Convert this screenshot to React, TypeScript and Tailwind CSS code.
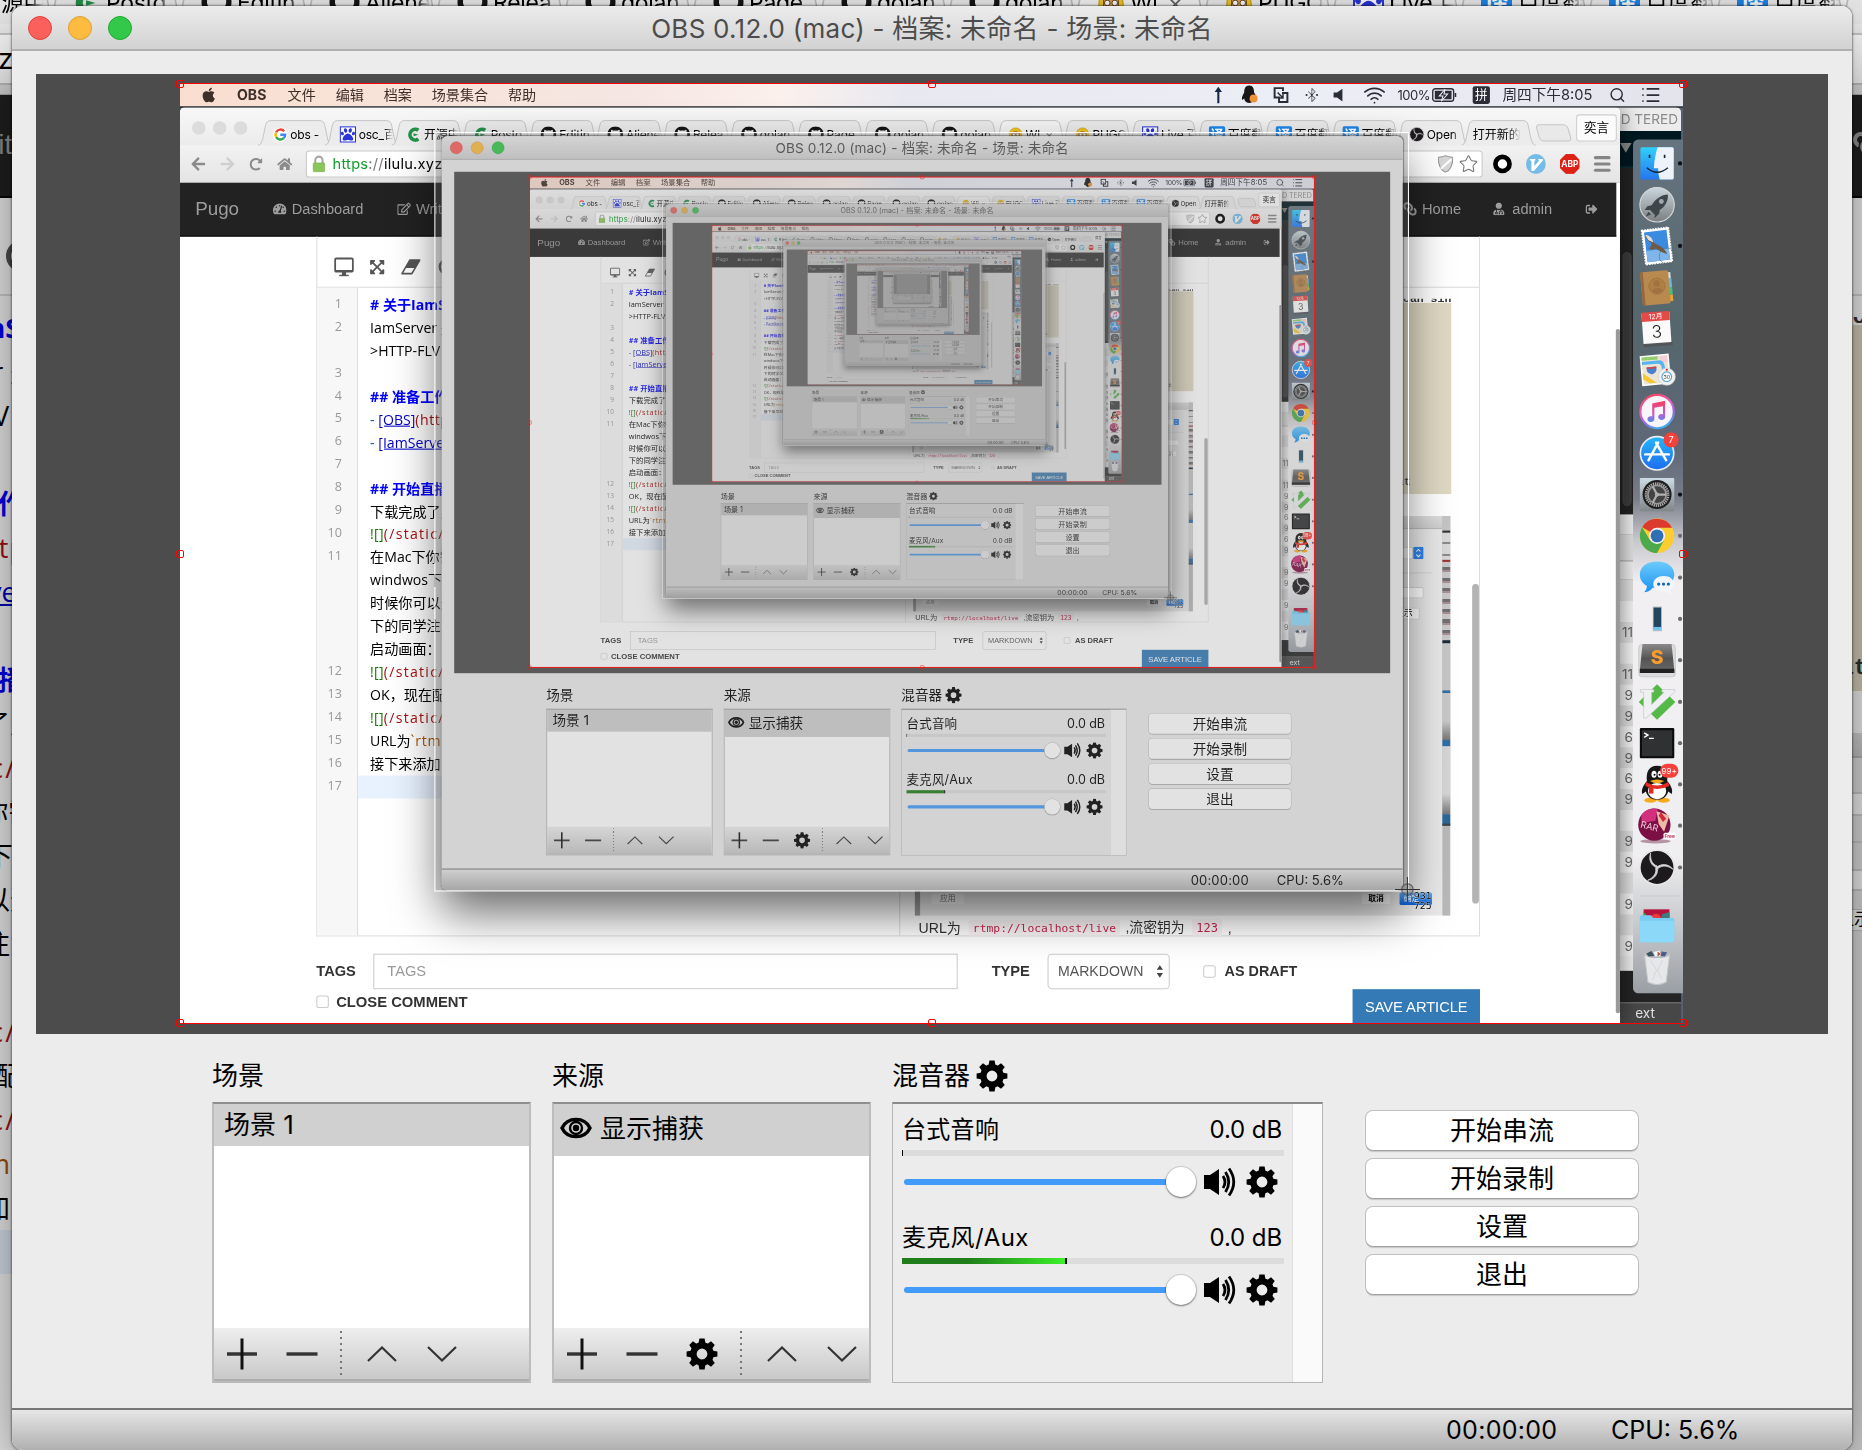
import React from "react";
import {
  FaApple,
  FaGithub,
  FaTachometerAlt,
  FaRegEdit,
  FaLink,
  FaUserMd,
  FaExpandArrowsAlt,
  FaHome,
  FaPaw,
  FaSignOutAlt,
  FaArrowLeft,
  FaArrowRight,
  FaRedoAlt,
} from "react-icons/fa";
import { Search, Wifi, Bluetooth, Star, List } from "lucide-react";

const MAX_DEPTH = 6;

/* ---------- shared glyphs ---------- */

function Gear({ className = "size-8" }: { className?: string }) {
  return (
    <svg viewBox="0 0 32 32" className={className}>
      <circle cx="16" cy="16" r="8.6" fill="none" stroke="currentColor" strokeWidth="6.4" />
      {[0, 45, 90, 135, 180, 225, 270, 315].map((a) => (
        <path key={a} d="M12.4 6 L13.4 0.6 H18.6 L19.6 6 Z" fill="currentColor" transform={`rotate(${a} 16 16)`} />
      ))}
    </svg>
  );
}

function Eye() {
  return (
    <svg viewBox="0 0 32 22" className="h-[22px] w-8">
      <path d="M2 11 C7.500 -0.5 24.500 -0.5 30 11 C24.500 22.5 7.500 22.5 2 11 Z" fill="none" stroke="#000" strokeWidth="3.4" />
      <circle cx="16" cy="11" r="6" fill="none" stroke="#000" strokeWidth="2.4" />
      <circle cx="16" cy="11" r="3.2" fill="#000" />
    </svg>
  );
}

function Speaker() {
  return (
    <svg viewBox="0 0 34 30" className="h-[30px] w-[34px]">
      <path d="M1 8 H7 L16 2 V28 L7 22 H1 Z" fill="#000" />
      <path d="M20 9 Q24 15 20 21" fill="none" stroke="#000" strokeWidth="2.8" />
      <path d="M22.5 5 Q29 15 22.5 25" fill="none" stroke="#000" strokeWidth="2.8" />
      <path d="M26 1.5 Q35.5 15 26 28.5" fill="none" stroke="#000" strokeWidth="2.8" />
    </svg>
  );
}

function Plus() {
  return (
    <svg viewBox="0 0 32 32" className="size-8">
      <path d="M1 16 H31" stroke="#333" strokeWidth="3.4" />
      <path d="M16 0.5 V31.5" stroke="#111" strokeWidth="3" />
    </svg>
  );
}

function Minus() {
  return (
    <svg viewBox="0 0 32 32" className="size-8">
      <path d="M0.5 16 H31.5" stroke="#333" strokeWidth="3.4" />
    </svg>
  );
}

function Caret({ down = false }: { down?: boolean }) {
  return (
    <svg viewBox="0 0 32 32" className="size-8">
      <path d={down ? "M2 9 L16 22.5 L30 9" : "M2 23 L16 9.5 L30 23"} fill="none" stroke="#333" strokeWidth="2.2" />
    </svg>
  );
}

function OrbLogo({ className }: { className?: string }) {
  return (
    <svg viewBox="0 0 66 66" className={className}>
      <circle cx="33" cy="33" r="32" fill="#1c1a1d" stroke="#e8e6e8" strokeWidth="3" />
      {[0, 120, 240].map((a) => (
        <path
          key={a}
          transform={`rotate(${a} 33 33)`}
          d="M33 34 C23 30 16 20 21 6 C20 18 24 27 33 30 Z"
          fill="#d6d4d6"
          stroke="#d6d4d6"
          strokeWidth="1.4"
        />
      ))}
    </svg>
  );
}

/* ---------- menu bar ---------- */

function MenuBar() {
  return (
    <div className="absolute top-0 left-0 flex h-[47px] w-[2880px] items-center border-b-2 border-[#15161a] bg-[linear-gradient(90deg,#f9ded0_0%,#f8e3d8_14%,#f5e6e3_30%,#fbf0ec_40%,#e8e9f0_48%,#eceef5_75%,#e3e3ec_100%)] pt-px text-[27px] leading-none text-[#3f2f29]">
      <FaApple className="ml-[39px] size-[32px]" />
      <span className="ml-[38px] w-[97px] text-[27px] font-bold">OBS</span>
      <div className="flex gap-[38px]">
        <span>文件</span>
        <span>编辑</span>
        <span>档案</span>
        <span>场景集合</span>
        <span>帮助</span>
      </div>
      <div className="ml-auto flex items-center pr-[44px] text-[#2b2d36]">
        <svg viewBox="0 0 20 36" className="mr-[32px] h-[36px] w-5">
          <path d="M10 2 L17 12 H12 V34 H8 V12 H3 Z" fill="#14284a" />
        </svg>
        <svg viewBox="0 0 34 40" className="mr-[28px] h-[38px] w-[34px]">
          <path d="M17 1 C8 1 7 10 7 15 C4 20 1 26 3 30 L7 27 C8 32 10 35 17 36 C24 36 27 31 28 27 L31 30 C33 25 30 20 27 15 C27 8 25 1 17 1 Z" fill="#1a1719" />
          <circle cx="26" cy="27" r="8" fill="#ee9239" />
        </svg>
        <svg viewBox="0 0 32 34" className="mr-[28px] size-[32px]" fill="none" stroke="#2b2d36" strokeWidth="4">
          <path d="M10 22 H3 V3 H20 V9" />
          <path d="M18 13 H29 V31 H12 V20" />
          <path d="M9 12 L20 23 M20 14 V23 H11" strokeWidth="3" />
        </svg>
        <span className="relative mr-[25px] size-[30px]">
          <Bluetooth className="size-[30px] text-[#6d7078]" strokeWidth={1.6} />
          <span className="absolute top-[13px] left-[3px] flex w-6 justify-between">
            <span className="size-[4px] rounded-full bg-[#2b2d36]" />
            <span className="size-[4px] rounded-full bg-[#2b2d36]" />
            <span className="size-[4px] rounded-full bg-[#2b2d36]" />
          </span>
        </span>
        <svg viewBox="0 0 24 32" className="mr-[34px] h-[30px] w-6">
          <path d="M1 11 H8 L19 3 V29 L8 21 H1 Z" fill="#2b2d36" />
        </svg>
        <Wifi className="mr-[22px] size-[44px]" strokeWidth={1.8} />
        <span className="w-[66px] text-[25px] tracking-[-1px]">100%</span>
        <svg viewBox="0 0 48 28" className="mr-[30px] h-[28px] w-12">
          <rect x="1.5" y="2" width="40" height="24" rx="5" fill="none" stroke="#2b2d36" strokeWidth="2.6" />
          <rect x="5.5" y="6" width="32" height="16" rx="1" fill="#2b2d36" />
          <path d="M25 3 L14 16 H21 L18 26 L30 12 H23 Z" fill="#2b2d36" stroke="#eceef5" strokeWidth="2" />
          <path d="M45 10 V18" stroke="#2b2d36" strokeWidth="3" />
        </svg>
        <span className="mr-[24px] flex h-[34px] w-[33px] items-center justify-center rounded-[4px] bg-[#2b2d36] text-[24px] text-white">
          拼
        </span>
        <span className="w-[204px] text-[28px] whitespace-nowrap">周四下午8:05</span>
        <Search className="mr-[28px] size-[32px]" strokeWidth={2} />
        <List className="size-[40px]" strokeWidth={2} />
      </div>
    </div>
  );
}

/* ---------- browser ---------- */

type TabKind = "google" | "paw" | "osc" | "github" | "gopher" | "fanyi" | "obs" | "none";

const TABS: { kind: TabKind; text: string; close?: boolean }[] = [
  { kind: "google", text: "obs -" },
  { kind: "paw", text: "osc_百" },
  { kind: "osc", text: "开源中" },
  { kind: "osc", text: "Postg" },
  { kind: "github", text: "Editin" },
  { kind: "github", text: "Aliene" },
  { kind: "github", text: "Relea" },
  { kind: "github", text: "golan" },
  { kind: "github", text: "Page" },
  { kind: "github", text: "golan" },
  { kind: "github", text: "golan" },
  { kind: "gopher", text: "Wl", close: true },
  { kind: "gopher", text: "PUGO" },
  { kind: "paw", text: "Live 百" },
  { kind: "fanyi", text: "百度翻" },
  { kind: "fanyi", text: "百度翻" },
  { kind: "fanyi", text: "百度翻" },
  { kind: "obs", text: "Open" },
  { kind: "none", text: "打开新的标" },
];

function TabIcon({ kind }: { kind: TabKind }) {
  switch (kind) {
    case "google":
      return (
        <svg viewBox="0 0 30 30" className="size-[30px]" fill="none" strokeWidth="5">
          <circle cx="15" cy="15" r="15" fill="#fff" />
          <path d="M23 8 A10 10 0 0 0 6.5 10" stroke="#ea4335" />
          <path d="M6.5 10 A10 10 0 0 0 6.5 20" stroke="#fbbc05" />
          <path d="M6.5 20 A10 10 0 0 0 22 22" stroke="#34a853" />
          <path d="M22 22 A10 10 0 0 0 25 15 H15" stroke="#4285f4" />
        </svg>
      );
    case "paw":
      return (
        <span className="flex size-[31px] shrink-0 items-center justify-center border-2 border-[#2a35d8] bg-white">
          <FaPaw className="size-[27px] shrink-0 text-[#2a35d8]" />
        </span>
      );
    case "osc":
      return (
        <svg viewBox="0 0 30 30" className="size-[30px]">
          <path d="M24 6 A11 11 0 1 0 24 24" fill="none" stroke="#23914a" strokeWidth="7.5" />
          <path d="M14 12 L24 15 L14 18 Z" fill="#23914a" />
        </svg>
      );
    case "github":
      return <FaGithub className="size-[31px] shrink-0 text-[#151515]" />;
    case "gopher":
      return (
        <svg viewBox="0 0 30 30" className="size-[30px]">
          <path d="M2 22 C1 6 7 1 15 1 C23 1 29 6 28 22 Z" fill="#f2c61f" stroke="#b98b10" />
          <path d="M7 12 Q15 5 23 12 V27 Q15 31 7 27 Z" fill="#d79e5a" stroke="#6e4a1d" />
          <circle cx="11" cy="15" r="3" fill="#fff" stroke="#5a3c18" />
          <circle cx="19" cy="15" r="3" fill="#fff" stroke="#5a3c18" />
        </svg>
      );
    case "fanyi":
      return (
        <span className="flex size-[31px] shrink-0 items-center justify-center rounded-[3px] bg-[#1d86ec] text-[25px] font-bold text-white">
          译
        </span>
      );
    case "obs":
      return <OrbLogo className="size-[31px]" />;
    default:
      return null;
  }
}

function Tab({ kind, text, close }: { kind: TabKind; text: string; close?: boolean }) {
  return (
    <div className="relative h-[49px] w-[128px] shrink-0">
      <svg viewBox="0 0 143 49" className="absolute top-0 left-0 h-[49px] w-[143px]">
        <path
          d="M0 49 Q6 48 9 38 L15 9 Q17 1 25 1 H118 Q126 1 128 9 L134 38 Q137 48 143 49"
          fill={close ? "#f6f6f6" : "#ececec"}
          stroke="#bdbdbd"
          strokeWidth="1.6"
        />
      </svg>
      <div className={`relative flex h-full items-center gap-[5px] pt-[6px] ${kind === "none" ? "pl-[22px]" : "pl-[29px]"}`}>
        <TabIcon kind={kind} />
        <span
          className={`shrink-0 overflow-hidden leading-[32px] whitespace-nowrap text-black [mask-image:linear-gradient(90deg,#000_75%,transparent)] ${kind === "none" ? "w-[92px] text-[23px]" : "w-[66px] text-[23px] tracking-[-0.3px]"}`}
        >
          {text}
          {close && <span className="ml-[10px] text-[#666]">×</span>}
        </span>
      </div>
    </div>
  );
}

function TabStrip() {
  return (
    <div className="flex h-[74px] bg-[linear-gradient(#f8f8f8,#ebebeb)]">
      <div className="mt-[27px] ml-[23px] flex w-[126px] gap-[14px]">
        <span className="size-[26px] rounded-full bg-[#dcdcdc]" />
        <span className="size-[26px] rounded-full bg-[#dcdcdc]" />
        <span className="size-[26px] rounded-full bg-[#dcdcdc]" />
      </div>
      <div className="mt-[25px] flex w-[2432px]">
        {TABS.map((t, i) => (
          <Tab key={i} {...t} />
        ))}
      </div>
      <div className="mt-[33px] ml-[18px] h-[33px] w-[62px] skew-x-[16deg] rounded-[8px] border-2 border-[#c6c6c6] bg-[#e9e9e9]" />
      <div className="mt-[14px] ml-[12px] flex h-[52px] w-[78px] items-center justify-center rounded-[6px] border-2 border-[#cfcfcf] bg-[#fbfbfb] text-[24px] text-black">
        奕言
      </div>
    </div>
  );
}

function AddressBar() {
  return (
    <div className="flex h-[71px] items-center border-b border-[#b8b8b8] bg-[linear-gradient(#f2f2f2,#e4e4e4)] text-[#8b8b8b]">
      <div className="flex items-center gap-[24px] pl-[20px]">
        <FaArrowLeft className="size-[30px]" />
        <FaArrowRight className="ml-[2px] size-[30px] text-[#cfcfcf]" />
        <FaRedoAlt className="ml-[3px] size-[25px]" />
        <FaHome className="ml-[4px] size-[29px]" />
      </div>
      <div className="ml-auto flex h-[52px] w-[2253px] items-center rounded-[6px] border-2 border-[#c9c9c9] bg-white pl-[10px] text-[28px] tracking-[0.5px]">
        <svg viewBox="0 0 26 32" className="h-[34px] w-[26px]">
          <path d="M6 15 V9 A7 7 0 0 1 20 9 V15" fill="none" stroke="#a8a8a8" strokeWidth="4" />
          <rect x="2" y="14" width="22" height="17" rx="2" fill="#8ac65a" stroke="#6aa43c" />
        </svg>
        <span className="ml-[13px] text-[#0f9d2b]">https</span>
        <span className="text-[#777]">://</span>
        <span className="text-black">ilulu.xyz/admin/write/</span>
        <svg viewBox="0 0 30 34" className="ml-auto h-[34px] w-[30px]">
          <path d="M15 1 C20 4 25 4 29 4 C29 18 26 28 15 33 C4 28 1 18 1 4 C5 4 10 4 15 1 Z" fill="#d7d7d7" stroke="#999" strokeWidth="2" />
          <path d="M6 26 L26 8" stroke="#fff" strokeWidth="4" />
        </svg>
        <Star className="mr-[6px] ml-[10px] size-[38px] text-[#777]" strokeWidth={1.3} />
      </div>
      <div className="mr-[18px] ml-[20px] flex items-center gap-[27px]">
        <span className="size-[36px] rounded-full border-[9px] border-black bg-white" />
        <svg viewBox="0 0 40 40" className="size-[38px]">
          <circle cx="20" cy="20" r="20" fill="#74bbe6" />
          <path d="M8 10 H19 V13 H17 V24 L27 13 H25 V10 H34 V13 L16 34 H11 V13 H8 Z" fill="#fff" />
        </svg>
        <span className="flex size-[38px] items-center justify-center bg-[#dd2116] text-[16px] font-bold text-white [clip-path:polygon(30%_0,70%_0,100%_30%,100%_70%,70%_100%,30%_100%,0_70%,0_30%)]">
          ABP
        </span>
        <span className="flex w-[32px] flex-col gap-[6px]">
          <span className="h-[6px] rounded-full bg-[#858585]" />
          <span className="h-[6px] rounded-full bg-[#858585]" />
          <span className="h-[6px] rounded-full bg-[#858585]" />
        </span>
      </div>
    </div>
  );
}

function NavBar() {
  return (
    <div className="flex h-[103px] w-[2750px] items-center border-b-2 border-[#080808] bg-[#222] pb-px [font-family:'Liberation_Sans','Noto_Sans_CJK_SC',sans-serif] text-[28px] leading-none text-[#9d9d9d]">
      <span className="w-[178px] pl-[29px] text-[36px]">Pugo</span>
      <span className="flex w-[238px] items-center gap-[10px]">
        <FaTachometerAlt className="size-[26px]" />
        Dashboard
      </span>
      <span className="flex items-center gap-[10px]">
        <FaRegEdit className="size-[26px]" />
        Write
      </span>
      <span className="ml-auto flex items-center gap-[10px]">
        <FaLink className="size-[26px] -scale-x-100" />
        Home
      </span>
      <span className="ml-[60px] flex items-center gap-[14px]">
        <FaUserMd className="size-[24px]" />
        admin
      </span>
      <FaSignOutAlt className="mr-[36px] ml-[64px] size-[23px]" />
    </div>
  );
}

type Seg = [string, string];
const H = "font-bold text-[#0000ff] tracking-[0px]";
const L = "text-[#0000cc] underline tracking-[0px]";
const R = "text-[#aa1111] tracking-[2.4px]";
const G = "text-[#117700] tracking-[0.5px]";
const K = "text-black";

const CODE: { n?: number; segs: Seg[] }[] = [
  { n: 1, segs: [["# 关于IamServer", H]] },
  { n: 2, segs: [["IamServer 是一个", K]] },
  { segs: [[">HTTP-FLV 直播", K]] },
  { n: 3, segs: [] },
  { n: 4, segs: [["## 准备工作", H]] },
  { n: 5, segs: [["- ", "text-[#0055aa]"], ["[OBS]", L], ["(https://obsproject.com)", "text-[#aa1111] tracking-[1px]"]] },
  { n: 6, segs: [["- ", "text-[#0055aa]"], ["[IamServer]", L]] },
  { n: 7, segs: [] },
  { n: 8, segs: [["## 开始直播", H]] },
  { n: 9, segs: [["下载完成了之后", K]] },
  { n: 10, segs: [["![]", G], ["(/static/upload)", R]] },
  { n: 11, segs: [["在Mac下你需要", K]] },
  { segs: [["windwos下载", K]] },
  { segs: [["时候你可以选择", K]] },
  { segs: [["下的同学注意", K]] },
  { segs: [["启动画面：", K]] },
  { n: 12, segs: [["![]", G], ["(/static/upload)", R]] },
  { n: 13, segs: [["OK，现在配置", K]] },
  { n: 14, segs: [["![]", G], ["(/static/upload)", R]] },
  { n: 15, segs: [["URL为", K], ["`rtmp://`", "text-[#aa5500] tracking-[1.5px]"]] },
  { n: 16, segs: [["接下来添加", K]] },
  { n: 17, segs: [] },
];

function DialogShot() {
  return (
    <div className="flex h-[765px] w-[1025px] border-l-[10px] border-[#9c9c9c] bg-[#e9e9e9]">
      <div className="flex w-[1000px] flex-col">
        <div className="h-[25px] border-b-2 border-[#bbb] bg-[linear-gradient(#dedede,#cfcfcf)]" />
        <div className="mt-[34px] flex justify-end pr-[36px]">
          <div className="h-[24px] w-[600px] border-2 border-[#d4d4d4] bg-white" />
          <svg viewBox="0 0 20 24" className="h-[24px] w-5">
            <rect width="20" height="24" rx="3" fill="#2f86ee" />
            <path d="M6 9 L10 5 L14 9 M6 15 L10 19 L14 15" stroke="#fff" strokeWidth="2" fill="none" />
          </svg>
        </div>
        <div className="mt-[25px] ml-[40px] h-[2px] w-[940px] bg-[#d4d4d4]" />
        <div className="mt-[26px] mr-[36px] h-[22px] w-[600px] self-end border-2 border-[#d4d4d4] bg-white" />
        <div className="mt-[18px] mr-[44px] flex h-[22px] w-[60px] items-center justify-center self-end rounded-[3px] border border-[#c9c9c9] bg-white text-[17px] text-black">
          显示
        </div>
        <div className="mt-auto mb-[20px] flex items-center text-[15px] text-[#777]">
          <span className="ml-[22px] flex h-[20px] w-[62px] items-center justify-center rounded-[3px] bg-[#f4f4f4]">应用</span>
          <span className="ml-auto flex h-[20px] w-[54px] items-center justify-center rounded-[3px] bg-[#f8f8f8] font-bold text-black">
            取消
          </span>
          <span className="mr-[20px] ml-[18px] flex h-[24px] w-[62px] items-center rounded-[3px] bg-[linear-gradient(#5ba9f8,#0a62dd)] pl-[8px] text-white">
            确定
          </span>
        </div>
      </div>
      <div className="flex w-[15px] flex-col bg-[#b9b9b9]">
        <div className="h-[28px] bg-[#c5c5c5]" />
        <div className="h-[4px] bg-[#333]" />
        <div className="h-[52px] bg-[repeating-linear-gradient(#d9d9d9_0_18px,#8b8b8b_18px_22px)]" />
        <div className="h-[4px] bg-[#9c3434]" />
        <div className="h-[150px] bg-[repeating-linear-gradient(#c9c9c9_0_10px,#6f6f74_10px_16px,#a98f92_16px_20px)]" />
        <div className="h-[6px] bg-[#1d2a3a]" />
        <div className="h-[90px] bg-[#c6c6c6]" />
        <div className="h-[5px] bg-[#2f6ea8]" />
        <div className="h-[90px] bg-[linear-gradient(#c8c8c8_60%,#777)]" />
        <div className="h-[12px] bg-[#2f6ea8]" />
        <div className="h-[130px] bg-[linear-gradient(#d5d5d5_70%,#777)]" />
        <div className="h-[22px] border-b-4 border-[#444] bg-[#2b679c]" />
      </div>
    </div>
  );
}

function Editor() {
  return (
    <div className="ml-[261px] flex h-[1340px] w-[2228px] flex-col border-x-2 border-b-2 border-[#ddd]">
      <div className="flex h-[98px] shrink-0 items-center gap-[34px] border-b-2 border-[#ddd] pt-[20px] pl-[32px] text-[#555]">
        <svg viewBox="0 0 38 38" className="size-[38px]">
          <rect x="2" y="3" width="34" height="25" rx="2" fill="none" stroke="#555" strokeWidth="3.5" />
          <path d="M2 25 H36 V29 H2 Z M15 29 H23 V34 H28 V37 H10 V34 H15 Z" fill="#555" />
        </svg>
        <FaExpandArrowsAlt className="ml-[-5px] size-[31px]" />
        <svg viewBox="0 0 38 32" className="ml-[-4px] h-[32px] w-[38px]">
          <path d="M17 3 H36 L21 29 H2 Z" fill="none" stroke="#555" strokeWidth="3" strokeLinejoin="round" />
          <path d="M17 3 H36 L27 18 H8.5 Z" fill="#555" />
        </svg>
        <span className="size-[32px] rounded-full border-[5px] border-[#555]" />
      </div>
      <div className="flex min-h-0 flex-1">
        <div className="w-[78px] shrink-0 border-r-2 border-[#ddd] bg-[#f7f7f7] pt-[7px] pr-[29px] text-right [font-family:'Open_Sans',sans-serif] text-[24px] leading-[44px] text-[#999]">
          {CODE.map((l, i) => (
            <div key={i} className="h-[44px]">
              {l.n ?? ""}
            </div>
          ))}
        </div>
        <div className="w-[1038px] shrink-0 overflow-hidden border-r-2 border-[#ddd] pt-[10px] [font-family:'Open_Sans','Noto_Sans_CJK_SC',sans-serif] text-[27px] leading-[44px]">
          {CODE.map((l, i) => (
            <div key={i} className={`h-[44px] pl-[23px] whitespace-pre ${l.n === 17 ? "bg-[#e8f2ff]" : ""}`}>
              {l.segs.map(([t, c], j) => (
                <span key={j} className={c}>
                  {t}
                </span>
              ))}
            </div>
          ))}
        </div>
        <div className="relative flex min-w-0 flex-1 flex-col overflow-hidden pt-[21px] pl-[28px]">
          <div className="flex h-[374px] w-[1027px] shrink-0 flex-col justify-between [font-family:'Liberation_Mono',monospace] text-[22px] font-bold text-[#333]">
            <div className="h-[8px] overflow-hidden text-right leading-[1px]">american sin</div>
            <div className="flex h-[368px] items-end justify-end bg-[#dfd9c3] pr-[78px] pb-[6px]">at</div>
          </div>
          <div className="mt-[42px] shrink-0">
            <DialogShot />
          </div>
          <div className="mt-[2px] flex h-[44px] shrink-0 items-center text-[27px] whitespace-nowrap text-[#333] [font-family:'Liberation_Sans','Noto_Sans_CJK_SC',sans-serif]">
            <span className="ml-[7px]">URL为</span>
            <span className="ml-[15px] rounded bg-[#fbf6f8] px-[8px] [font-family:'DejaVu_Sans_Mono',monospace] text-[21.700px] text-[#c7254e]">
              rtmp://localhost/live
            </span>
            <span className="ml-[10px] text-[26.500px]">,流密钥为</span>
            <span className="ml-[14px] rounded bg-[#fbf6f8] px-[8px] [font-family:'DejaVu_Sans_Mono',monospace] text-[23px] text-[#c7254e]">123</span>
            <span className="ml-[11px]">,</span>
          </div>
          <div className="absolute top-[567px] right-0 h-[612px] w-[13px] rounded-full bg-[#b3b3b3]" />
        </div>
      </div>
    </div>
  );
}

function ArticleForm() {
  return (
    <div className="ml-[261px] w-[2228px] pt-[33px] [font-family:'Liberation_Sans',sans-serif] text-[28px] leading-none text-[#333]">
      <div className="flex h-[68px] items-center">
        <span className="w-[109px] font-bold">TAGS</span>
        <div className="flex h-[68px] w-[1119px] items-center border-2 border-[#ccc] pl-[25px] text-[#999]">TAGS</div>
        <span className="ml-[65px] w-[107px] font-bold">TYPE</span>
        <div className="flex h-[68px] w-[234px] items-center justify-between rounded-[8px] border-2 border-[#ccc] pr-[10px] pl-[18px] text-[27px] text-[#555]">
          MARKDOWN
          <svg viewBox="0 0 14 26" className="h-[26px] w-[14px] shrink-0">
            <path d="M7 1 L13 10 H1 Z M7 25 L13 16 H1 Z" fill="#444" />
          </svg>
        </div>
        <span className="ml-[64px] size-[24px] rounded-[5px] border-2 border-[#ccc] bg-white" />
        <span className="ml-[17px] text-[27.500px] font-bold">AS DRAFT</span>
      </div>
      <div className="flex h-[66px] items-start justify-between">
        <span className="flex h-[48px] items-center text-[28.300px] font-bold">
          <span className="mr-[14px] size-[24px] rounded-[5px] border-2 border-[#ccc] bg-white" />
          CLOSE COMMENT
        </span>
        <span className="flex h-[66px] w-[244px] items-center justify-center bg-[#337ab7] pt-px text-white">SAVE ARTICLE</span>
      </div>
    </div>
  );
}

function Browser() {
  return (
    <div className="absolute top-[46px] left-0 w-[2757px] overflow-hidden rounded-t-[10px] bg-white shadow-[0_0_40px_rgba(0,0,0,0.5)]">
      <TabStrip />
      <AddressBar />
      <NavBar />
      <Editor />
      <ArticleForm />
      <div className="absolute top-[425px] right-0 h-[1310px] w-[8px] rounded-full bg-[#999]" />
    </div>
  );
}

/* ---------- windows behind the browser ---------- */

const ROWS = ["", "", "11", "", "11", "9", "9", "6", "9", "6", "9", "", "9", "9", "", "9", "", "9"];

function BackWindows() {
  return (
    <div className="absolute top-[46px] left-[2740px] flex h-[1754px] w-[134px] flex-col overflow-hidden rounded-tr-[10px] bg-[#222] text-[26px] leading-none">
      <div className="flex h-[46px] shrink-0 items-center justify-end bg-[#ececec] pr-[6px] text-[#8a8a8a]">D TERED</div>
      <div className="flex h-[70px] shrink-0 items-center border-b-2 border-[#0d3a44] bg-[#001820] pl-[16px] text-[24px] text-[#888]">▼</div>
      <div className="flex h-[664px] shrink-0 pt-[162px] pl-[22px]">
        <div className="h-[486px] w-[17px] rounded-full border border-[#555] bg-[#3b3b3b]" />
      </div>
      <div className="flex h-[874px] shrink-0 flex-col bg-[#ececec] text-[#666]">
        <div className="h-[40px] shrink-0 border-b-2 border-[#c9c9c9]" />
        <div className="h-[50px] shrink-0 border-b-2 border-[#aaa] bg-[#dedede]" />
        <div className="h-[36px] shrink-0 border-b-2 border-[#c9c9c9]" />
        {ROWS.map((r, i) => (
          <div key={i} className={`flex h-[40px] w-[42px] shrink-0 items-center justify-end ${i % 2 ? "bg-[#f2f2f2]" : "bg-[#dfdfdf]"}`}>
            {r}
          </div>
        ))}
      </div>
      <div className="h-[60px] shrink-0 bg-[#242424]" />
      <div className="flex flex-1 items-center border-t-2 border-[#777] bg-[#474747] pl-[46px] text-[#e0e0e0]">ext</div>
    </div>
  );
}

/* ---------- dock ---------- */

function DockGlyph({ name }: { name: string }) {
  const c = "size-[68px] overflow-visible";
  switch (name) {
    case "finder":
      return (
        <svg viewBox="0 0 66 66" className={c}>
          <defs>
            <linearGradient id="fdBg" x1="0" y1="0" x2="0" y2="1">
              <stop offset="0" stopColor="#30d0fb" />
              <stop offset="1" stopColor="#2576f0" />
            </linearGradient>
          </defs>
          <rect x="2" y="3" width="62" height="60" rx="3" fill="url(#fdBg)" />
          <path d="M34 3 H61 Q64 3 64 6 V60 Q64 63 61 63 H38 C36 56 35 50 35 42 H27 C28 28 30 14 34 3 Z" fill="#eef3fa" />
          <path d="M19 17 V23 M47 17 V23" stroke="#16242f" strokeWidth="3" />
          <path d="M14 41 Q33 58 53 41" fill="none" stroke="#16242f" strokeWidth="2.6" />
        </svg>
      );
    case "rocket":
      return (
        <svg viewBox="0 0 66 66" className={c}>
          <defs>
            <linearGradient id="rkBg" x1="0" y1="0" x2="0" y2="1">
              <stop offset="0" stopColor="#c9d6dc" />
              <stop offset="1" stopColor="#7b7f80" />
            </linearGradient>
          </defs>
          <circle cx="33" cy="33" r="32" fill="url(#rkBg)" stroke="#d8dadb" strokeWidth="2" />
          <path d="M53 14 C42 14 30 22 23 34 L15 36 L10 43 H20 L29 52 L28 58 L37 50 L38 43 C49 36 54 25 53 14 Z" fill="#3e464b" />
          <circle cx="41" cy="27" r="4.5" fill="#a2a8ab" />
          <path d="M17 46 L12 55 L22 51 Z" fill="#3e464b" />
        </svg>
      );
    case "mail":
      return (
        <svg viewBox="0 0 66 66" className={c}>
          <g transform="rotate(-7 33 33)">
            <rect x="8" y="1" width="50" height="64" fill="#fff" stroke="#fff" strokeWidth="3" strokeDasharray="3 2" />
            <rect x="12" y="5" width="42" height="56" fill="#3b8be0" />
            <path d="M12 40 H54 V61 H12 Z" fill="#7fb5ea" />
            <path d="M14 12 C22 14 26 20 29 28 C38 33 46 38 50 50 C42 48 36 42 30 38 C24 40 20 38 17 36 C22 33 24 30 23 26 C18 22 15 18 14 12 Z" fill="#6e5a45" />
            <path d="M14 10 C21 10 26 18 27 26 L18 20 Z" fill="#e8e0d4" />
          </g>
          <circle cx="52" cy="52" r="15" fill="none" stroke="#55606a" strokeWidth="1.5" opacity="0.6" />
        </svg>
      );
    case "contacts":
      return (
        <svg viewBox="0 0 66 66" className={c}>
          <g transform="rotate(-5 33 33)">
            <path d="M52 6 H60 V18 H52 Z" fill="#d9dee2" />
            <path d="M52 18 H61 V34 H52 Z" fill="#62b8e8" />
            <path d="M52 34 H61 V48 H52 Z" fill="#49c07a" />
            <path d="M52 48 H61 V60 H52 Z" fill="#e6a732" />
            <rect x="4" y="2" width="52" height="62" rx="4" fill="#b98a50" />
            <path d="M4 2 H9 V64 H4 Z" fill="#96693a" />
            <circle cx="33" cy="30" r="15" fill="#b07f46" stroke="#9d7140" strokeWidth="1.5" />
            <circle cx="33" cy="25" r="6" fill="#9f7341" />
            <path d="M23 39 C25 32 41 32 43 39 Q33 48 23 39 Z" fill="#9f7341" />
          </g>
        </svg>
      );
    case "calendar":
      return (
        <svg viewBox="0 0 66 66" className={c}>
          <g transform="rotate(-4 33 33)">
            <rect x="6" y="56" width="54" height="9" fill="#50565a" />
            <rect x="6" y="3" width="52" height="56" fill="#fafafa" />
            <rect x="6" y="1" width="52" height="17" fill="#e34a48" />
            <text x="32" y="14" fontSize="13" textAnchor="middle" fill="#fff">12月</text>
            <text x="32" y="49" fontSize="32" fontWeight="300" textAnchor="middle" fill="#222">3</text>
          </g>
        </svg>
      );
    case "maps":
      return (
        <svg viewBox="0 0 66 66" className={c}>
          <g transform="rotate(-5 33 33)">
            <rect x="3" y="4" width="54" height="56" fill="#fff" />
            <rect x="6" y="7" width="48" height="50" fill="#ece4d4" />
            <path d="M6 7 H36 V13 H6 Z" fill="#93cf6d" />
            <path d="M38 7 H54 V20 H44 Z" fill="#f4cfd8" />
            <path d="M6 15 H40 Q48 17 48 30 V40 H42 V30 Q42 21 34 21 H6 Z" fill="#58b4ee" />
            <path d="M6 36 L30 56 H18 L6 48 Z" fill="#f5c832" />
            <path d="M14 26 H32 V32 Q31 38 23 40 Q15 38 14 32 Z" fill="#4a80d0" />
            <path d="M14 26 H32 V29 H14 Z" fill="#d8453f" />
          </g>
          <circle cx="51" cy="45" r="16" fill="#f0f0f0" stroke="#ccc" />
          <circle cx="51" cy="45" r="9" fill="#fff" stroke="#57a0d0" strokeWidth="2" />
          <text x="51" y="49" fontSize="10" textAnchor="middle" fill="#444">30</text>
          <circle cx="51" cy="32" r="2" fill="#e02020" />
        </svg>
      );
    case "itunes":
      return (
        <svg viewBox="0 0 66 66" className={c}>
          <defs>
            <linearGradient id="itRing" x1="0.3" y1="0" x2="0.7" y2="1">
              <stop offset="0" stopColor="#fb4767" />
              <stop offset="0.4" stopColor="#e85fc0" />
              <stop offset="0.65" stopColor="#a063ea" />
              <stop offset="1" stopColor="#35b8f0" />
            </linearGradient>
            <linearGradient id="itNote" x1="0" y1="0" x2="0" y2="1">
              <stop offset="0" stopColor="#fb3c5b" />
              <stop offset="0.6" stopColor="#c45cc8" />
              <stop offset="1" stopColor="#4a90f0" />
            </linearGradient>
          </defs>
          <circle cx="33" cy="33" r="31" fill="#f8f6fb" stroke="url(#itRing)" strokeWidth="4" />
          <path d="M24 18 L48 13 V43 A6.5 5.5 0 1 1 44 38 V23 L28 26 V47 A6.5 5.5 0 1 1 24 42 Z" fill="url(#itNote)" />
        </svg>
      );
    case "appstore":
      return (
        <svg viewBox="0 0 66 66" className={c}>
          <defs>
            <linearGradient id="asBg" x1="0" y1="0" x2="0" y2="1">
              <stop offset="0" stopColor="#25b6fa" />
              <stop offset="1" stopColor="#1e6cf0" />
            </linearGradient>
          </defs>
          <circle cx="33" cy="33" r="31" fill="url(#asBg)" stroke="#e8eef4" strokeWidth="3" />
          <path d="M35 13 L17 46 M31 13 L50 46 M11 35 H55" stroke="#fff" strokeWidth="4.5" strokeLinecap="round" />
          <circle cx="59" cy="8" r="14" fill="#f4413c" />
          <text x="59" y="14" fontSize="17" textAnchor="middle" fill="#fff">7</text>
        </svg>
      );
    case "prefs":
      return (
        <svg viewBox="0 0 66 66" className={c}>
          <defs>
            <linearGradient id="prBg" x1="0" y1="0" x2="0" y2="1">
              <stop offset="0" stopColor="#cddce4" />
              <stop offset="1" stopColor="#808688" />
            </linearGradient>
          </defs>
          <rect x="1" y="2" width="64" height="62" rx="2" fill="url(#prBg)" />
          <circle cx="33" cy="33" r="27" fill="#1e1e1e" />
          <circle cx="33" cy="33" r="20.5" fill="none" stroke="#a8a8a8" strokeWidth="5" strokeDasharray="2.6 1.4" />
          <circle cx="33" cy="33" r="17" fill="#444" stroke="#999" strokeWidth="3" />
          <path d="M33 33 L25 18 M33 33 H50 M33 33 L25 48" stroke="#b0b0b0" strokeWidth="4" />
          <circle cx="33" cy="33" r="4" fill="#b0b0b0" />
        </svg>
      );
    case "chrome":
      return (
        <svg viewBox="0 0 66 66" className={c}>
          <circle cx="33" cy="33" r="32" fill="#fbcd30" />
          <path d="M33 33 L5.3 17 A32 32 0 0 1 61 18 L33 18 Z" fill="#dc3a2e" />
          <path d="M5.3 17 L20 41 L33 48 L46 41 L33 65 A32 32 0 0 1 5.3 17 Z" fill="#4caa4c" />
          <circle cx="33" cy="33" r="15" fill="#f2f2f2" />
          <circle cx="33" cy="33" r="12" fill="#2f6fb4" />
        </svg>
      );
    case "messages":
      return (
        <svg viewBox="0 0 66 66" className={c}>
          <defs>
            <linearGradient id="msBg" x1="0" y1="0" x2="0" y2="1">
              <stop offset="0" stopColor="#6ccbfa" />
              <stop offset="1" stopColor="#1c93f2" />
            </linearGradient>
          </defs>
          <path d="M33 3 C14 3 1 13 1 27 C1 36 6 44 14 48 C14 54 12 57 9 60 C17 60 22 56 25 52 C48 54 65 43 65 27 C65 13 52 3 33 3 Z" fill="url(#msBg)" />
          <path d="M46 30 C34 30 26 36 26 45 C26 54 34 59 46 59 L50 59 C53 62 56 63 60 63 C58 60 58 58 58 56 C62 53 64 49 64 45 C64 36 57 30 46 30 Z" fill="#f2f6fa" />
          <circle cx="36" cy="45" r="3" fill="#1769b8" />
          <circle cx="45" cy="45" r="3" fill="#1769b8" />
          <circle cx="54" cy="45" r="3" fill="#1769b8" />
        </svg>
      );
    case "phone":
      return (
        <svg viewBox="0 0 66 66" className={c}>
          <rect x="25" y="10" width="17" height="46" fill="#b9bfc4" />
          <rect x="26.5" y="12" width="14" height="38" fill="#224660" />
          <rect x="26.5" y="48" width="14" height="6" fill="#6ec3f2" />
        </svg>
      );
    case "sublime":
      return (
        <svg viewBox="0 0 66 66" className={c}>
          <defs>
            <linearGradient id="sbBg" x1="0" y1="0" x2="0" y2="1">
              <stop offset="0" stopColor="#8a8a8a" />
              <stop offset="0.5" stopColor="#555" />
              <stop offset="1" stopColor="#686868" />
            </linearGradient>
          </defs>
          <rect x="-1" y="4" width="68" height="60" rx="6" fill="#dcdcdc" stroke="#b5b5b5" />
          <path d="M6 3 H60 L65 52 V57 H1 V52 Z" fill="url(#sbBg)" />
          <path d="M1 49 H65 V57 H1 Z" fill="#222" />
          <text x="33" y="41" fontSize="36" fontWeight="800" textAnchor="middle" fill="#fb9b2c">S</text>
        </svg>
      );
    case "vim":
      return (
        <svg viewBox="0 0 66 66" className={c}>
          <path d="M33 0 L67 33 L33 66 L-1 33 Z" fill="#55b948" />
          <path d="M2 10 H27 V15 H23 V38 L46 15 H42 V10 H66 V14 L13 63 H8 V15 H2 Z" fill="#eef0f2" stroke="#b9bcc0" strokeWidth="1" />
        </svg>
      );
    case "terminal":
      return (
        <svg viewBox="0 0 66 66" className={c}>
          <rect x="1" y="5" width="64" height="56" rx="2" fill="#0c0c0c" />
          <rect x="5" y="9" width="56" height="48" fill="#2f3133" />
          <path d="M9 14 L16 18 L9 22 M18 24 H27" fill="none" stroke="#fff" strokeWidth="2.6" />
        </svg>
      );
    case "qq":
      return (
        <svg viewBox="0 0 66 70" className={c}>
          <ellipse cx="20" cy="66" rx="12" ry="5" fill="#f6ab1c" />
          <ellipse cx="46" cy="66" rx="12" ry="5" fill="#f6ab1c" />
          <path d="M33 -2 C16 -2 11 12 13 28 C7 36 1 44 4 54 L11 49 C14 60 22 65 33 65 C44 65 52 60 55 49 L62 54 C65 44 59 36 53 28 C55 12 50 -2 33 -2 Z" fill="#161616" />
          <ellipse cx="33" cy="48" rx="18" ry="16" fill="#fff" />
          <ellipse cx="27" cy="15" rx="5" ry="7" fill="#fff" />
          <ellipse cx="39" cy="15" rx="5" ry="7" fill="#fff" />
          <circle cx="28" cy="16" r="2" />
          <circle cx="38" cy="16" r="2" />
          <path d="M19 28 Q33 22 47 28 Q33 37 19 28 Z" fill="#f6ab1c" />
          <path d="M11 30 Q33 44 55 30 L57 38 Q33 50 10 38 Z" fill="#e32b22" />
          <path d="M17 40 H26 V53 H17 Z" fill="#e32b22" />
          <rect x="39" y="-6" width="36" height="28" rx="14" fill="#f4413c" />
          <text x="57" y="14" fontSize="16" textAnchor="middle" fill="#fff">99+</text>
        </svg>
      );
    case "rar":
      return (
        <svg viewBox="0 0 66 66" className={c}>
          <ellipse cx="30" cy="62" rx="28" ry="4" fill="#8d5a70" opacity="0.6" />
          <circle cx="28" cy="31" r="30" fill="#7c0f43" />
          <path d="M4 13 A30 30 0 0 1 34 2 L30 24 L4 28 Z" fill="#d0307c" />
          <path d="M32 6 L56 14 L46 44 L36 30 Z" fill="#efb9a8" />
          <path d="M40 8 L50 20 L44 26 L36 14 Z" fill="#d02a3c" />
          <text x="18" y="40" fontSize="17" textAnchor="middle" fill="#f4c9dc" transform="rotate(14 18 38)">RAR</text>
          <rect x="45" y="46" width="23" height="12" rx="3" fill="#fff" />
          <text x="56.5" y="55" fontSize="9" fontWeight="700" textAnchor="middle" fill="#c0305a">Free</text>
        </svg>
      );
    case "obs":
      return <OrbLogo className={c} />;
    case "folder":
      return (
        <svg viewBox="0 0 66 66" className={c}>
          <path d="M8 3 H56 V22 H8 Z" fill="#b5123c" />
          <path d="M8 8 L20 20 H8 Z" fill="#3c9a52" />
          <circle cx="31" cy="20" r="9" fill="#ee3a3a" />
          <path d="M42 12 L56 8 V22 H40 Z" fill="#3d7b80" />
          <path d="M1 17 Q1 14 4 14 H22 L26 19 H62 Q65 19 65 22 V61 Q65 64 62 64 H4 Q1 64 1 61 Z" fill="#79cdf3" />
          <path d="M1 24 H65 V61 Q65 64 62 64 H4 Q1 64 1 61 Z" fill="#8bd8f8" />
        </svg>
      );
    case "trash":
      return (
        <svg viewBox="0 0 66 70" className={c}>
          <path d="M8 8 L15 64 Q33 74 51 64 L58 8 Z" fill="#e6e7e9" stroke="#c4c7ca" strokeWidth="2" />
          <ellipse cx="33" cy="9" rx="25" ry="8" fill="#b5babe" />
          <path d="M12 8 L22 3 L28 13 L16 14 Z" fill="#3d5560" />
          <path d="M26 5 L38 2 L40 13 L29 14 Z" fill="#f3f3f3" />
          <path d="M34 4 L40 9 L34 14 Z" fill="#b64a3a" />
          <path d="M42 4 L53 6 L48 14 L40 13 Z" fill="#4b5c8a" />
          <path d="M20 22 L32 40 L24 60 M44 20 L34 42 L42 58" fill="none" stroke="#d6d9db" strokeWidth="2" />
        </svg>
      );
    default:
      return null;
  }
}

const DOCK: [string, boolean][] = [
  ["finder", true],
  ["rocket", false],
  ["mail", true],
  ["contacts", false],
  ["calendar", false],
  ["maps", false],
  ["itunes", false],
  ["appstore", false],
  ["prefs", true],
  ["chrome", true],
  ["messages", true],
  ["phone", true],
  ["sublime", true],
  ["vim", true],
  ["terminal", true],
  ["qq", true],
  ["rar", true],
  ["obs", true],
];

function Dock() {
  return (
    <div className="absolute top-[108px] left-[2782px] flex h-[1635px] w-[98px] flex-col rounded-l-[10px] bg-[linear-gradient(#66747f_0%,#55666c_22%,#5f6878_36%,#787d88_42%,#c9c8ce_47%,#f1eff1_52%,#efeef0_84%,#c6c9cd_92%,#9a9fa5_100%)] pt-[6px]">
      {DOCK.map(([name, running], i) => (
        <div key={name} className="flex h-[79.3px] shrink-0 items-center pl-[12px]">
          <DockGlyph name={name} />
          {running && <span className={`ml-[6px] size-[8px] rounded-full ${i < 9 ? "bg-[#0d0f12]" : "bg-[#6b6b70]"}`} />}
        </div>
      ))}
      <div className="mt-[14px] ml-[14px] h-[3px] w-[74px] shrink-0 bg-[#cfced0]" />
      <div className="mt-[15px] flex h-[80px] shrink-0 items-center pl-[12px]">
        <DockGlyph name="folder" />
      </div>
      <div className="flex h-[80px] shrink-0 items-center pl-[12px]">
        <DockGlyph name="trash" />
      </div>
    </div>
  );
}

/* ---------- OBS window ---------- */

function Handle({ className }: { className: string }) {
  return <span className={`absolute size-[8px] -translate-x-1/2 -translate-y-1/2 rounded-[2px] border border-[#f00] ${className}`} />;
}

function Preview({ depth }: { depth: number }) {
  return (
    <div className="ml-[24px] h-[960px] w-[1792px] bg-[#4c4c4c] pt-[10px] pl-[144px]">
      <div className="relative h-[939px] w-[1503px] bg-[#8a8a8a]">
        <div className="h-full w-full overflow-hidden">
          {depth < MAX_DEPTH && (
            <div className="mt-[-0.8px] ml-[-0.4px] origin-top-left scale-[0.5223]">
              <Screen depth={depth + 1} />
            </div>
          )}
        </div>
        <div className={`absolute inset-[-1px] border-[#f00] ${depth === 0 ? "border" : "border-2"}`} />
        <Handle className="top-0 left-0" />
        <Handle className="top-0 left-1/2" />
        <Handle className="top-0 left-full" />
        <Handle className="top-1/2 left-0" />
        <Handle className="top-1/2 left-full" />
        <Handle className="top-full left-0" />
        <Handle className="top-full left-1/2" />
        <Handle className="top-full left-full" />
      </div>
    </div>
  );
}

function ListPanel({ title, gear, children }: { title: string; gear?: boolean; children: React.ReactNode }) {
  return (
    <div className="w-[319px]">
      <div className="flex h-[52px] items-center pb-px text-[26px]">{title}</div>
      <div className="flex h-[281px] flex-col border-2 border-[#bababa] border-x-[#bdbdbd] border-t-[#8e8e8e] bg-white">
        {children}
        <div className="mt-auto flex h-[53px] items-center border-b-2 border-[#adadad] bg-[linear-gradient(#eeeeee,#c9c9c9)] pl-[12px]">
          <Plus />
          <span className="w-[28px]" />
          <Minus />
          {gear && (
            <>
              <span className="w-[28px]" />
              <Gear />
            </>
          )}
          <span className="ml-[22px] h-[45px] w-[26px] bg-[repeating-linear-gradient(#777_0_2px,transparent_2px_6px)] bg-[length:2px_100%] bg-no-repeat" />
          <Caret />
          <span className="w-[28px]" />
          <Caret down />
        </div>
      </div>
    </div>
  );
}

const METER_WIDTHS = ["w-[163px]", "w-[72px]", "w-[94px]", "w-[130px]"];

function Channel({ name, level, depth }: { name: string; level: boolean; depth: number }) {
  return (
    <div className="h-[108px]">
      <div className="flex h-[30px] items-center justify-between text-[24px] leading-none">
        <span className="tracking-[0.3px]">{name}</span>
        <span className="pr-[2px] tracking-[-0.1px]">0.0 dB</span>
      </div>
      <div className="mt-[5px] flex h-[6px] bg-[#dcdcdc]">
        {level && (
          <div className={`bg-[linear-gradient(90deg,#1f7d1a_0,#1f7d1a_65px,#3cf02a_163px)] ${METER_WIDTHS[Math.min(depth, 3)]}`} />
        )}
        <div className={level ? "w-[2px] bg-black" : "w-px bg-black"} />
      </div>
      <div className="mt-[10px] flex h-[32px] items-center pl-[2px]">
        <div className="h-[6px] w-[262px] rounded-l-full bg-[#429bf9]" />
        <div className="size-[30px] rounded-full bg-white shadow-[0_1px_2px_rgba(0,0,0,0.45),0_0_1px_1px_rgba(0,0,0,0.12)]" />
        <div className="ml-[7px]">
          <Speaker />
        </div>
        <div className="ml-[9px]">
          <Gear />
        </div>
      </div>
    </div>
  );
}

function Mixer({ depth }: { depth: number }) {
  return (
    <div className="ml-[21px] w-[431px]">
      <div className="flex h-[52px] items-center gap-[6px] pb-px text-[26px]">
        混音器
        <Gear />
      </div>
      <div className="flex h-[281px] border border-t-2 border-[#b5b5b5] border-t-[#8a8a8a]">
        <div className="w-[391px] pt-[11px] pl-[9px]">
          <div className="w-[382px]">
            <Channel name="台式音响" level={false} depth={depth} />
            <Channel name="麦克风/Aux" level={true} depth={depth} />
          </div>
        </div>
        <div className="ml-auto w-[30px] border-l border-[#dedede] bg-[#fafafa]" />
      </div>
    </div>
  );
}

function ObsWindow({ depth }: { depth: number }) {
  return (
    <div className="absolute top-[102px] left-[501px] flex h-[1444px] w-[1840px] flex-col overflow-hidden rounded-[11px] bg-[#ececec] text-black">
      <div className="relative flex h-[45px] shrink-0 items-center justify-center border-b-2 border-[#b0b0b0] bg-[linear-gradient(#ececec,#d2d2d2)] pt-[3px] text-[26px] leading-none tracking-[0.25px] text-[#4c4c4c]">
        <div className="absolute top-[10px] left-[16px] flex gap-[16px]">
          <span className="size-[24px] rounded-full border border-[#e0443e] bg-[#fc605c]" />
          <span className="size-[24px] rounded-full border border-[#de9f34] bg-[#fdbc40]" />
          <span className="size-[24px] rounded-full border border-[#1dac2c] bg-[#34c84a]" />
        </div>
        OBS 0.12.0 (mac) - 档案: 未命名 - 场景: 未命名
      </div>
      <div className="h-[23px] shrink-0" />
      <Preview depth={depth} />
      <div className="mt-[16px] flex pl-[200px]">
        <ListPanel title="场景">
          <div className="flex h-[42px] items-center bg-[#d0d0d0] pb-px pl-[10px] text-[26px]">场景 1</div>
        </ListPanel>
        <div className="w-[21px]" />
        <ListPanel title="来源" gear>
          <div className="flex h-[52px] items-center bg-[#d0d0d0] pb-[4px] pl-[6px] text-[26px]">
            <Eye />
            <span className="ml-[8px]">显示捕获</span>
          </div>
        </ListPanel>
        <Mixer depth={depth} />
        <div className="ml-[43px] flex w-[272px] flex-col gap-[9px] pt-[61px]">
          {["开始串流", "开始录制", "设置", "退出"].map((t) => (
            <div
              key={t}
              className="flex h-[39px] items-center justify-center rounded-[7px] bg-white text-[26px] leading-none shadow-[0_0_0_1px_rgba(0,0,0,0.18),0_2px_1px_rgba(0,0,0,0.16)]"
            >
              {t}
            </div>
          ))}
        </div>
      </div>
      <div className="mt-auto flex h-[42px] items-center border-t-2 border-[#767676] bg-[linear-gradient(#e6e6e6,#b0b0b0)] pl-[1434px] text-[25px] leading-none">
        <span className="w-[165px] tracking-[0.3px]">00:00:00</span>
        <span>CPU: 5.6%</span>
      </div>
    </div>
  );
}

/* ---------- region-capture overlay ---------- */

function CaptureRegion() {
  return (
    <>
      <div className="absolute top-[96px] left-[489px] h-[1450px] w-[1862px] bg-[rgba(137,137,137,0.244)] outline-2 outline-white" />
      <svg viewBox="0 0 48 48" className="absolute top-[1520px] left-[2326px] size-[48px]">
        <circle cx="24" cy="24" r="11" fill="rgba(120,120,120,0.4)" stroke="#555" strokeWidth="2" />
        <path d="M24 0 V48 M0 24 H48" stroke="#333" strokeWidth="2" />
      </svg>
      <div className="absolute top-[1548px] left-[2362px] [font-family:'DejaVu_Sans',sans-serif] text-[18px] leading-[18px] text-black [text-shadow:0_0_2px_#fff,0_0_2px_#fff]">
        <div>931</div>
        <div>725</div>
      </div>
    </>
  );
}

function Screen({ depth }: { depth: number }) {
  return (
    <div className="relative h-[1800px] w-[2880px] overflow-hidden bg-[#566372]">
      <BackWindows />
      <Browser />
      <MenuBar />
      <Dock />
      <div className="absolute top-[102px] left-[501px] h-[1444px] w-[1840px] rounded-[11px] shadow-[0_0_2px_1px_rgba(0,0,0,0.4),0_40px_90px_rgba(0,0,0,0.6)]" />
      <ObsWindow depth={depth} />
      {depth > 0 && <CaptureRegion />}
    </div>
  );
}

export default function App() {
  return (
    <div className="relative h-[1450px] w-[1862px] overflow-hidden [font-family:Inter,'Noto_Sans_CJK_SC',sans-serif]">
      <div className="absolute top-[-96px] left-[-489px]">
        <Screen depth={0} />
      </div>
    </div>
  );
}
